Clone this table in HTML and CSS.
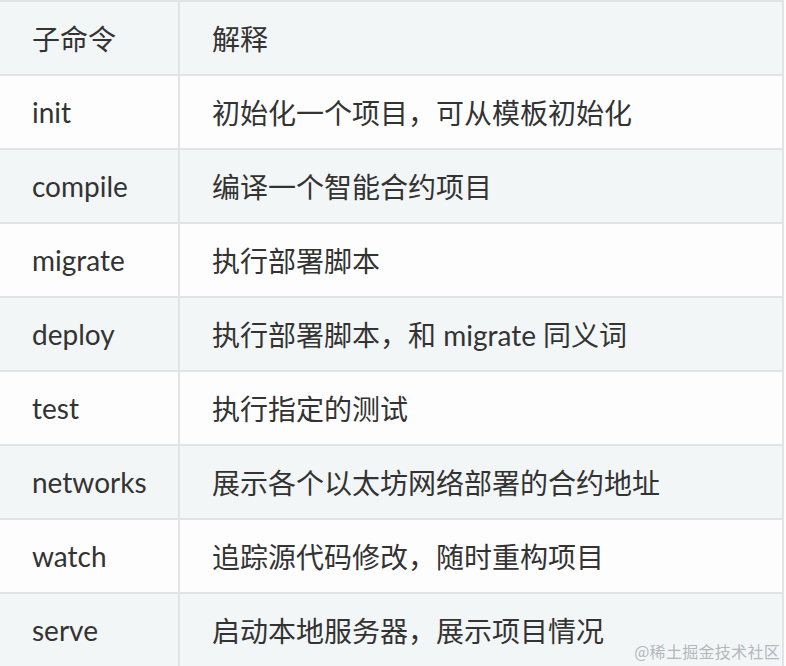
FILE: index.html
```html
<!DOCTYPE html>
<html lang="zh-CN">
<head>
<meta charset="utf-8">
<link rel="stylesheet" href="styles.css">
</head>
<body>
<div class="wrap">
<table class="cmd-table">
  <thead>
    <tr><th class="c1">子命令</th><th class="c2">解释</th></tr>
  </thead>
  <tbody>
    <tr><td class="c1">init</td><td class="c2">初始化一个项目，可从模板初始化</td></tr>
    <tr><td class="c1">compile</td><td class="c2">编译一个智能合约项目</td></tr>
    <tr><td class="c1">migrate</td><td class="c2">执行部署脚本</td></tr>
    <tr><td class="c1">deploy</td><td class="c2">执行部署脚本，和 migrate 同义词</td></tr>
    <tr><td class="c1">test</td><td class="c2">执行指定的测试</td></tr>
    <tr><td class="c1">networks</td><td class="c2">展示各个以太坊网络部署的合约地址</td></tr>
    <tr><td class="c1">watch</td><td class="c2">追踪源代码修改，随时重构项目</td></tr>
    <tr><td class="c1">serve</td><td class="c2">启动本地服务器，展示项目情况</td></tr>
  </tbody>
</table>
<div class="watermark">@稀土掘金技术社区</div>
</div>
</body>
</html>
```

FILE: styles.css
```css
html, body {
  margin: 0;
  padding: 0;
  background: #fdfdfd;
}
.wrap {
  position: relative;
  width: 786px;
  height: 666px;
  overflow: hidden;
}
.cmd-table {
  border-collapse: separate;
  border-spacing: 0;
  width: 784px;
  border-top: 2px solid #e1e4e6;
  font-family: Lato, "Noto Sans CJK SC", sans-serif;
  font-size: 28px;
  color: #333;
  table-layout: fixed;
}
.cmd-table th,
.cmd-table td {
  padding: 0 0 0 32px;
  text-align: left;
  font-weight: normal;
  border-bottom: 2px solid #e1e4e6;
  border-right: 2px solid #e1e4e6;
  vertical-align: middle;
  white-space: nowrap;
  box-sizing: border-box;
  height: 74px;
}
.cmd-table .c1 {
  width: 180px;
}
.cmd-table thead tr,
.cmd-table tbody tr:nth-child(even) {
  background: #f3f6f7;
}
.cmd-table tbody tr:nth-child(odd) {
  background: #fdfdfd;
}
.watermark {
  position: absolute;
  right: 6px;
  bottom: 3px;
  font-family: "Noto Sans CJK SC", sans-serif;
  font-size: 16px;
  color: #b4b8bc;
  letter-spacing: 0.3px;
}
```
